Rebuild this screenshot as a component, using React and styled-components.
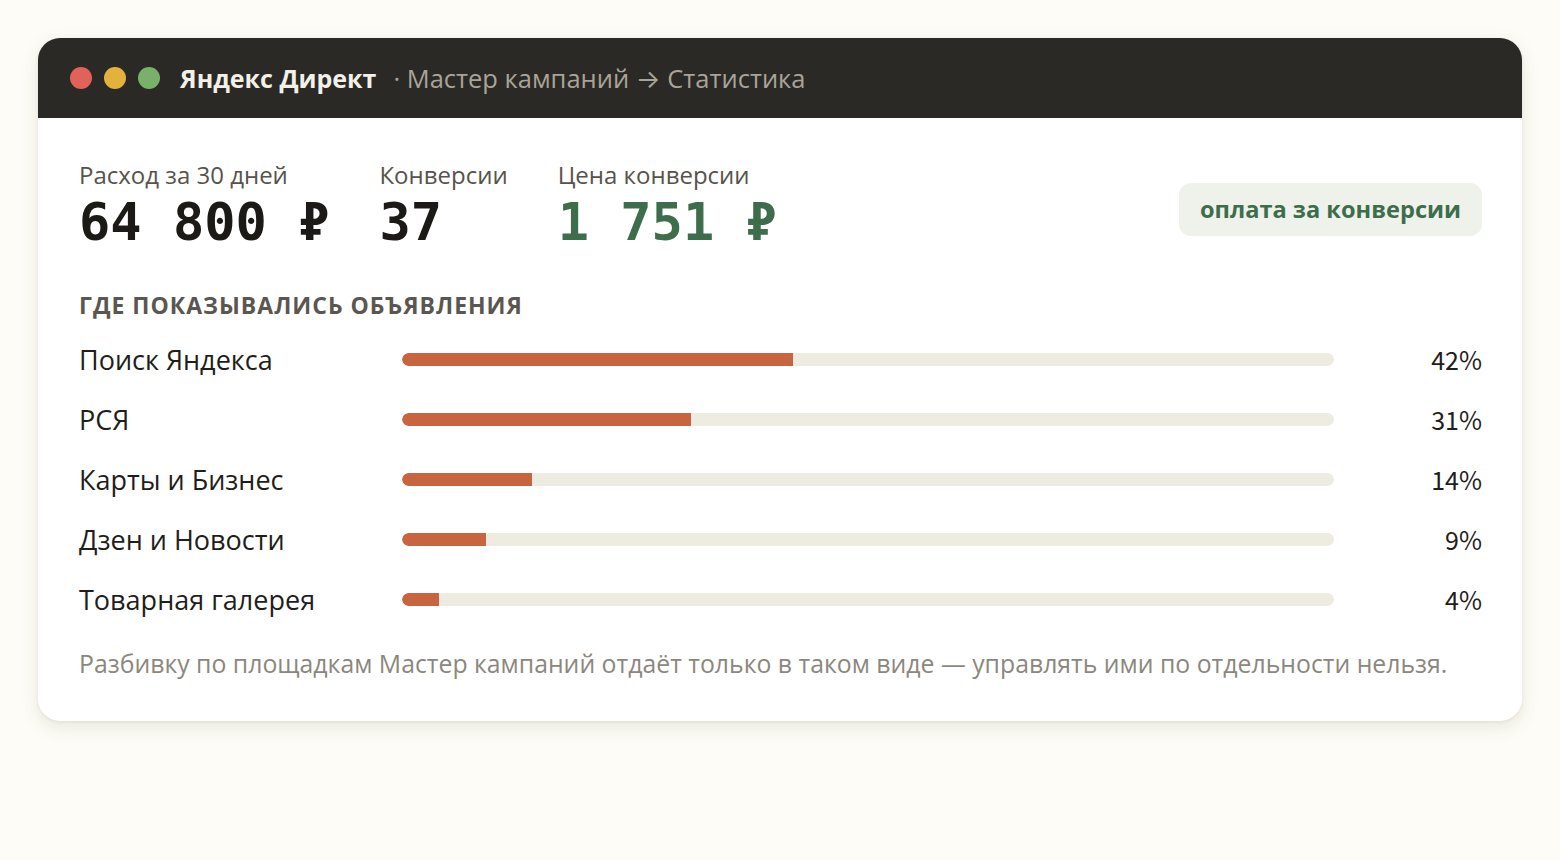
import React from 'react'
import styled, { createGlobalStyle } from 'styled-components'

const GlobalStyle = createGlobalStyle`
  html, body {
    margin: 0;
    padding: 0;
    background: #fdfcf6;
  }
  body {
    font-family: "Open Sans", "DejaVu Sans", sans-serif;
  }
`

const stats = [
  { label: 'Расход за 30 дней', value: '64 800 ₽' },
  { label: 'Конверсии', value: '37' },
  { label: 'Цена конверсии', value: '1 751 ₽', accent: true },
]

const placements = [
  { name: 'Поиск Яндекса', share: 42 },
  { name: 'РСЯ', share: 31 },
  { name: 'Карты и Бизнес', share: 14 },
  { name: 'Дзен и Новости', share: 9 },
  { name: 'Товарная галерея', share: 4 },
]

export default function App() {
  return (
    <>
      <GlobalStyle />
      <Page>
        <Window>
          <TitleBar>
            <Dots>
              <Dot color="#e2625a" />
              <Dot color="#e3b23c" />
              <Dot color="#79b06a" />
            </Dots>
            <AppName>Яндекс Директ</AppName>
            <Crumbs>
              · Мастер кампаний <Arrow>→</Arrow> Статистика
            </Crumbs>
          </TitleBar>

          <Body>
            <StatsRow>
              <Stats>
                {stats.map((s) => (
                  <Stat key={s.label}>
                    <StatLabel>{s.label}</StatLabel>
                    <StatValue $accent={s.accent}>{s.value}</StatValue>
                  </Stat>
                ))}
              </Stats>
              <Badge>оплата за конверсии</Badge>
            </StatsRow>

            <SectionTitle>Где показывались объявления</SectionTitle>

            <Rows>
              {placements.map((p) => (
                <Row key={p.name}>
                  <RowName>{p.name}</RowName>
                  <Track>
                    <Fill style={{ width: `${p.share}%` }} />
                  </Track>
                  <Percent>{p.share}%</Percent>
                </Row>
              ))}
            </Rows>

            <Note>
              Разбивку по площадкам Мастер кампаний отдаёт только в таком виде — управлять ими по отдельности нельзя.
            </Note>
          </Body>
        </Window>
      </Page>
    </>
  )
}

const Page = styled.div`
  min-height: 860px;
  padding: 38px 38px 0;
  box-sizing: border-box;
`

const Window = styled.div`
  background: #ffffff;
  border-radius: 22px;
  overflow: hidden;
  box-shadow: 0 6px 18px rgba(80, 70, 40, 0.12), 0 1px 3px rgba(80, 70, 40, 0.08);
`

const TitleBar = styled.div`
  height: 80px;
  background: #2a2925;
  display: flex;
  align-items: center;
  padding: 0 32px;
`

const Dots = styled.div`
  display: flex;
  gap: 12px;
  margin-right: 20px;
`

const Dot = styled.span`
  width: 22px;
  height: 22px;
  border-radius: 50%;
  background: ${(p) => p.color};
`

const AppName = styled.span`
  color: #f3f0e8;
  font-weight: 700;
  font-size: 25px;
  margin-right: 17px;
`

const Crumbs = styled.span`
  color: #a9a49a;
  font-size: 25.5px;
`

const Arrow = styled.span`
  font-family: Inter, "DejaVu Sans", sans-serif;
  font-size: 26px;
`

const Body = styled.div`
  padding: 41px 40px 42px 41px;
`

const StatsRow = styled.div`
  display: flex;
  justify-content: space-between;
  align-items: center;
`

const Stats = styled.div`
  display: flex;
  gap: 50px;
`

const Stat = styled.div`
  display: flex;
  flex-direction: column;
`

const StatLabel = styled.div`
  font-size: 24px;
  color: #57534c;
  line-height: 32px;
`

const StatValue = styled.div`
  font-family: "DejaVu Sans Mono", monospace;
  font-weight: 700;
  font-size: 52px;
  line-height: 62px;
  color: ${(p) => (p.$accent ? '#3e6d4c' : '#1b1a17')};
`

const Badge = styled.div`
  background: #eef2eb;
  color: #3e6d4c;
  font-weight: 700;
  font-size: 23.6px;
  padding: 0 21px;
  height: 53px;
  line-height: 53px;
  border-radius: 12px;
  margin-top: 6px;
`

const SectionTitle = styled.div`
  margin-top: 36px;
  font-size: 23px;
  line-height: 32px;
  font-weight: 700;
  letter-spacing: 1px;
  text-transform: uppercase;
  color: #5a5650;
`

const Rows = styled.div`
  margin-top: 8px;
  display: flex;
  flex-direction: column;
`

const Row = styled.div`
  height: 60px;
  display: grid;
  grid-template-columns: 323px 932px 1fr;
  align-items: center;
`

const RowName = styled.div`
  font-size: 27px;
  line-height: 36px;
  color: #1f1e1b;
  margin-top: 2px;
`

const Track = styled.div`
  height: 13px;
  background: #eeebe0;
  border-radius: 7px;
  overflow: hidden;
`

const Fill = styled.div`
  height: 100%;
  background: #c8643f;
  border-radius: 7px 0 0 7px;
`

const Percent = styled.div`
  font-family: "Noto Sans CJK SC", sans-serif;
  font-size: 25px;
  line-height: 36px;
  color: #1f1e1b;
  text-align: right;
`

const Note = styled.p`
  margin: 18px 0 0;
  font-size: 24.8px;
  line-height: 32px;
  color: #8c877d;
`
